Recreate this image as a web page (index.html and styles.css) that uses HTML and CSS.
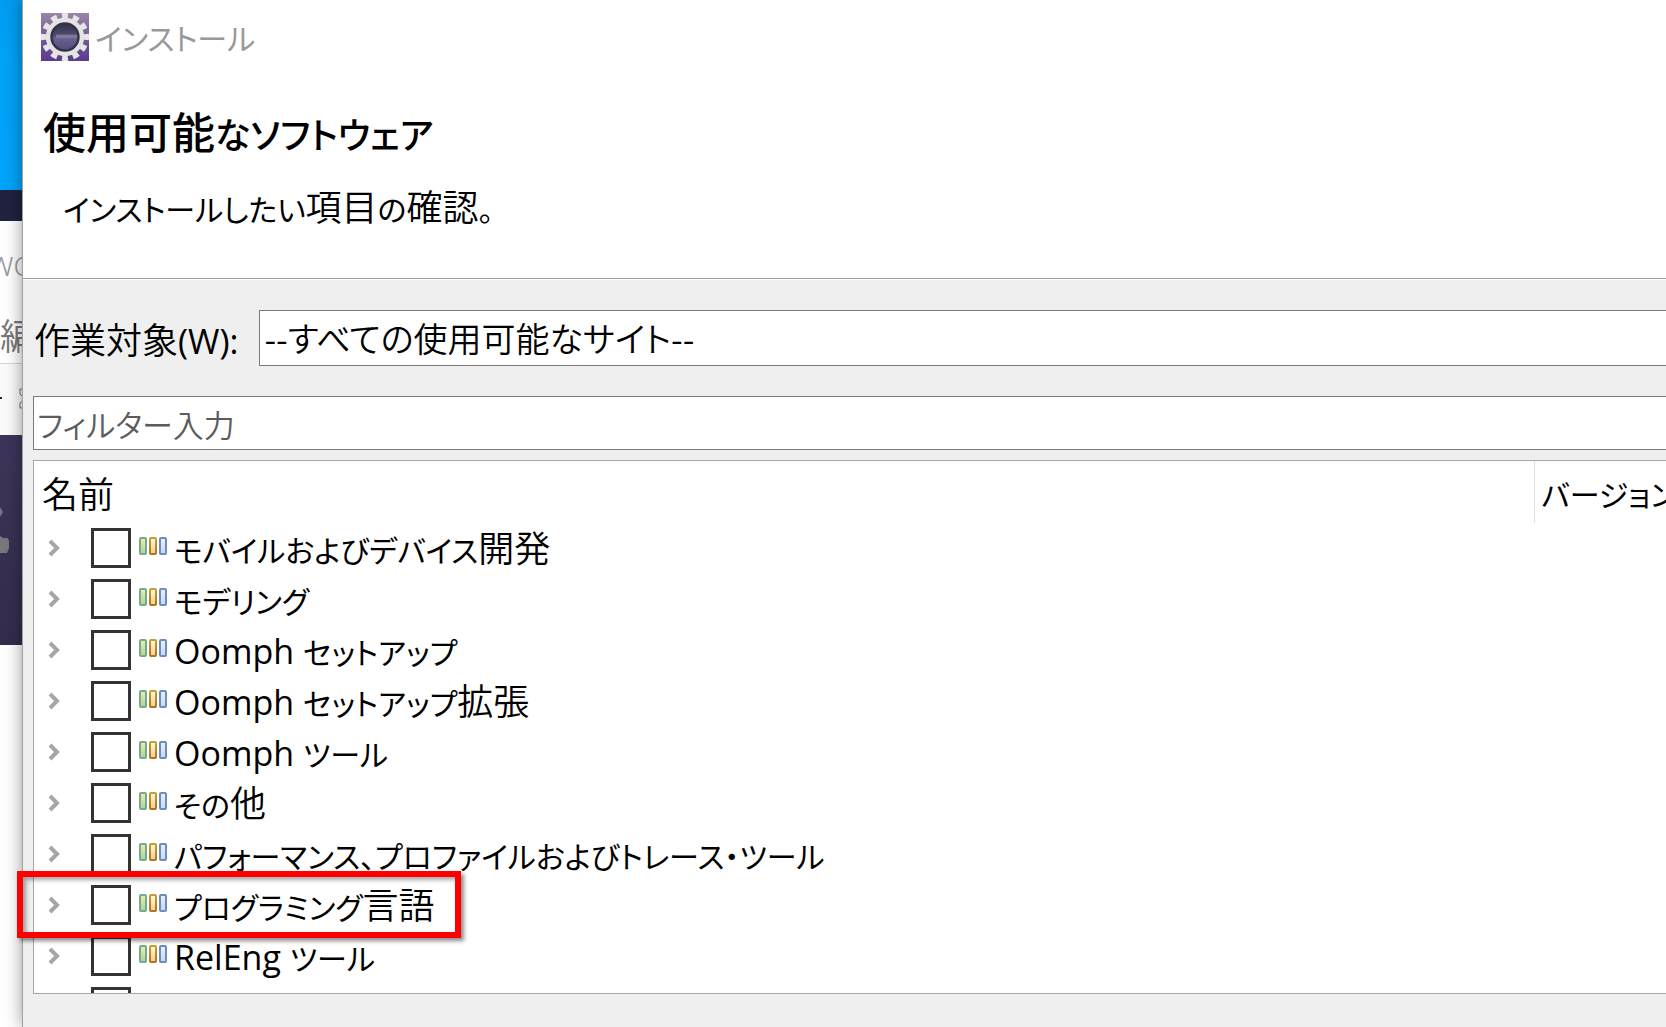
FILE: index.html
```html
<!DOCTYPE html>
<html lang="ja">
<head>
  <meta charset="UTF-8">
  <meta name="viewport" content="width=device-width, initial-scale=1.0">
  <title>インストール</title>
  <link rel="stylesheet" href="styles.css">
</head>
<body>
  <!-- shared icons -->
  <svg class="defs" width="0" height="0">
    <defs>
      <linearGradient id="green" x1="0" y1="0" x2="0" y2="1">
        <stop offset="0" stop-color="#eaf0a8"/><stop offset="1" stop-color="#b4cf96"/>
      </linearGradient>
      <linearGradient id="gold" x1="0" y1="0" x2="0" y2="1">
        <stop offset="0" stop-color="#fffae6"/><stop offset="1" stop-color="#fbc98c"/>
      </linearGradient>
      <linearGradient id="goldEdge" x1="0" y1="0" x2="0" y2="1">
        <stop offset="0" stop-color="#c4a02c"/><stop offset="1" stop-color="#a8761c"/>
      </linearGradient>
      <linearGradient id="blue" x1="0" y1="0" x2="0" y2="1">
        <stop offset="0" stop-color="#e9f1fb"/><stop offset="1" stop-color="#c4d9ee"/>
      </linearGradient>
      <symbol id="chevron" viewBox="0 0 12 18">
        <path d="M2 2L9 9L2 16" fill="none" stroke="#a6a6a6" stroke-width="4"/>
      </symbol>
      <symbol id="category" viewBox="0 0 28 18">
        <rect x="1" y="1" width="6" height="16" rx="1" fill="url(#green)" stroke="#74aa92" stroke-width="2"/>
        <rect x="11" y="1" width="6" height="16" rx="1" fill="url(#gold)" stroke="url(#goldEdge)" stroke-width="2"/>
        <rect x="21" y="1" width="6" height="16" rx="1" fill="url(#blue)" stroke="#6c8cc0" stroke-width="2"/>
      </symbol>
    </defs>
  </svg>

  <div class="desktop">
    <div class="wallpaper"></div>
    <div class="taskbar"></div>
    <div class="back-title"><span>wo</span></div>
    <div class="back-menu">編</div>
    <div class="back-toolbar">
      <svg width="22" height="66" viewBox="0 0 22 66">
        <path d="M0 34h2" stroke="#222" stroke-width="2"/>
        <path d="M23 25h-3v5l3 3v4l-3 2v5h3" fill="none" stroke="#777"/>
      </svg>
    </div>
    <div class="splash">
      <svg width="22" height="210" viewBox="0 0 22 210">
        <path d="M0 72l3 5l-3 5zM0 101l3 2h5l1 3v7l-2 5H0z" fill="#77787c"/>
      </svg>
    </div>
  </div>

  <main class="window">
    <header class="banner">
      <div class="titlebar">
        <svg class="app-icon" width="48" height="48" viewBox="0 0 16 16">
          <defs>
            <linearGradient id="appBg" x1="0" y1="0" x2="0" y2="1">
              <stop offset="0" stop-color="#9a86a6"/><stop offset="0.5" stop-color="#735a98"/><stop offset="1" stop-color="#5a3c92"/>
            </linearGradient>
            <linearGradient id="appBall" x1="0" y1="0" x2="0" y2="1">
              <stop offset="0" stop-color="#33314a"/><stop offset="0.45" stop-color="#514a70"/><stop offset="0.55" stop-color="#686090"/><stop offset="1" stop-color="#544a7c"/>
            </linearGradient>
          </defs>
          <rect width="16" height="16" fill="url(#appBg)"/>
          <circle cx="8" cy="8" r="6.9" fill="none" stroke="#e6e6e4" stroke-width="2.2" pathLength="48" stroke-dasharray="2.2 1.8" stroke-dashoffset="1.1"/>
          <circle cx="8" cy="8" r="6.4" fill="#e4e4e2"/>
          <circle cx="8" cy="8" r="4.5" fill="url(#appBall)" stroke="#35314a" stroke-width="0.8"/>
          <path d="M5 7.8h7" stroke="#7f7898" stroke-width="1.2"/>
        </svg>
        <span class="kana">インストール</span>
      </div>
      <h1>使用可能<span class="kana">なソフトウェア</span></h1>
      <p><span class="kana">インストールしたい</span>項目<span class="kana">の</span>確認<span class="kana">。</span></p>
    </header>

    <div class="content">
      <div class="site-row">
        <label for="site">作業対象<span class="latin">(W):</span></label>
        <select id="site">
          <option>--すべての使用可能なサイト--</option>
        </select>
      </div>
      <input class="filter" type="text" placeholder="フィルター入力" aria-label="フィルター入力">
      <div class="tree">
        <table>
          <thead>
            <tr><th>名前</th><th class="version"><span class="kana">バージョン</span></th></tr>
          </thead>
          <tbody id="items"></tbody>
        </table>
      </div>
    </div>
  </main>

  <div class="highlight"></div>

  <script src="script.js"></script>
</body>
</html>
```

FILE: styles.css
```css
* {
  box-sizing: border-box;
}
body {
  margin: 0;
  height: 100vh;
  display: flex;
  overflow: hidden;
  position: relative;
  background-color: #fff;
  color: #000;
  font-family: "Noto Sans CJK JP", sans-serif;
  font-size: 36px;
  font-weight: 350;
  font-feature-settings: "palt";
  line-height: 50px;
}
.defs {
  position: absolute;
}
.latin {
  font-family: "Open Sans", sans-serif;
  font-size: 34px;
  font-weight: 400;
  line-height: 0;
}
/* kana is set smaller than the kanji beside it */
.kana {
  font-size: 30px;
  font-weight: 400;
  line-height: 0;
}

/* strip of the desktop behind the dialog */
.desktop {
  width: 22px;
  flex: none;
  overflow: hidden;
  color: #777;
}
.desktop svg {
  display: block;
}
.wallpaper {
  height: 190px;
  background: linear-gradient(#009cf0, #00a2f6 30%, #00a4fa);
}
.taskbar {
  height: 31px;
  background-color: #20223f;
}
.back-title {
  height: 88px;
  padding-top: 17px;
  display: flex;
  justify-content: center;
  font-family: "Open Sans", sans-serif;
  font-size: 34px;
  color: #999;
}
.back-menu {
  height: 55px;
  border-bottom: 1px solid #d4d4d4;
}
.back-toolbar {
  height: 71px;
  background-color: #fafafa;
}
.splash {
  height: 210px;
  background: linear-gradient(#3e3459, #332c4c);
}

.window {
  flex: 1;
  min-width: 0;
  display: flex;
  flex-direction: column;
  border-left: 1px solid #a0a0a0;
  background-color: #efefef;
  box-shadow: 0 0 16px rgba(0, 0, 0, 0.4);
}
.banner {
  height: 279px;
  flex: none;
  padding: 13px 18px;
  background-color: #fff;
  border-bottom: 1px solid #a0a0a0;
}
.titlebar {
  display: flex;
  align-items: center;
  gap: 6px;
  height: 48px;
  color: #999;
}
h1 {
  margin: 39px 0 0;
  padding-left: 2px;
  font-size: 43px;
  line-height: 60px;
  font-weight: 500;
}
h1 .kana {
  font-size: 36px;
  font-weight: 500;
}
.banner p {
  margin: 20px 0 0 22px;
}

.content {
  flex: 1;
  min-height: 0;
  display: flex;
  flex-direction: column;
  padding: 30px 0 33px 10px;
  border-top: 1px solid #fff;
}
.site-row {
  display: flex;
  align-items: center;
  gap: 21px;
  padding-left: 1px;
  margin-bottom: 30px;
}
select, .filter {
  font: inherit;
  font-feature-settings: inherit;
  color: #000;
  background-color: #fff;
  border: 1px solid #7a7a7a;
  border-right: 0;
  border-radius: 0;
  outline: none;
}
select {
  appearance: none;
  flex: 1;
  height: 56px;
  padding: 0 4px;
  font-size: 34px;
}
.filter {
  flex: none;
  height: 54px;
  padding: 0 3px;
  margin-bottom: 10px;
  font-size: 31px;
}
.filter::placeholder {
  color: #5c5c5c;
  opacity: 1;
}

.tree {
  flex: 1;
  min-height: 0;
  overflow: hidden;
  background-color: #fff;
  border: 1px solid #a6a6ac;
  border-right: 0;
}
table {
  width: 100%;
  table-layout: fixed;
  border-collapse: collapse;
}
th {
  height: 62px;
  padding: 0 8px;
  text-align: left;
  font-weight: 350;
  white-space: nowrap;
}
.version {
  width: 132px;
  padding: 0 0 4px 7px;
  border-left: 1px solid #e2e2e2;
}
td {
  padding: 0;
}
.item {
  display: flex;
  align-items: center;
  height: 51px;
  padding: 0 0 1px 14px;
  white-space: nowrap;
}
.item label {
  padding-bottom: 4px;
}
.expand {
  width: 12px;
  height: 18px;
  margin-right: 31px;
  padding: 0;
  border: 0;
  background: none;
}
.expand svg, .category {
  display: block;
}
.item input {
  appearance: none;
  width: 40px;
  height: 40px;
  margin: 0 8px 0 0;
  border: 3px solid #333;
  background-color: #fff;
}
.category {
  margin: 0 7px 4px 0;
}

/* red marker round the programming languages entry */
.highlight {
  position: absolute;
  left: 17px;
  top: 871px;
  width: 444px;
  height: 67px;
  border: 6px solid #fe0000;
  box-shadow: 3px 3px 4px rgba(0, 0, 0, 0.45), inset 3px 3px 4px rgba(0, 0, 0, 0.35);
  pointer-events: none;
}
```

FILE: script.js
```js
const items = [
  'モバイルおよびデバイス開発',
  'モデリング',
  'Oomph セットアップ',
  'Oomph セットアップ拡張',
  'Oomph ツール',
  'その他',
  'パフォーマンス、プロファイルおよびトレース・ツール',
  'プログラミング言語',
  'RelEng ツール',
  ''
];

// wrap kana and latin runs so each script gets its own font size
function markScripts(name) {
  return name
    .replace(/[\u3001-\u30ff]+/g, '<span class="kana">$&</span>')
    .replace(/^[A-Za-z]+ /, '<span class="latin">$&</span>');
}

document.getElementById('items').innerHTML = items.map((name, i) => `
  <tr>
    <td colspan="2">
      <div class="item">
        <button class="expand" type="button" aria-label="展開"><svg width="12" height="18"><use href="#chevron"/></svg></button>
        <input type="checkbox" id="item-${i}">
        <svg class="category" width="28" height="18"><use href="#category"/></svg>
        <label for="item-${i}">${markScripts(name)}</label>
      </div>
    </td>
  </tr>`).join('');
```
